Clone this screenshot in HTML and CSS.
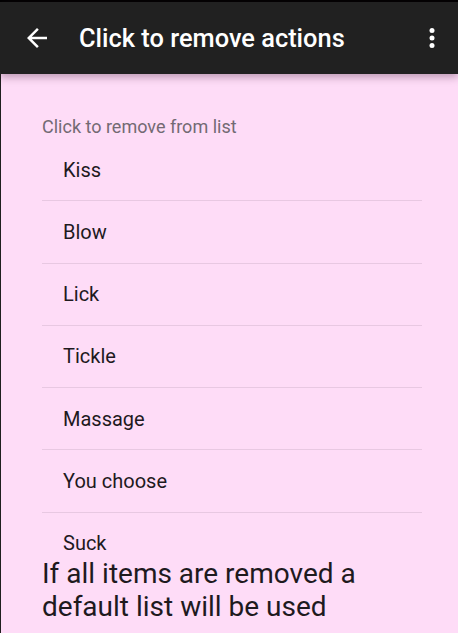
FILE: index.html
```html
<!DOCTYPE html>
<html>
<head lang="en">
    <meta charset="UTF-8">
    <title>Click to remove actions</title>
    <link rel="stylesheet" href="styles.css">
</head>
<body>
<div class="statusbar"></div>
<div class="toolbar">
    <svg class="icon" viewBox="0 0 24 24"><path d="M20 11H7.83l5.59-5.59L12 4l-8 8 8 8 1.41-1.41L7.83 13H20v-2z" fill="#fff"/></svg>
    <div class="title">Click to remove actions</div>
    <svg class="icon more" viewBox="0 0 24 24"><circle cx="12" cy="6" r="2" fill="#fff"/><circle cx="12" cy="12" r="2" fill="#fff"/><circle cx="12" cy="18" r="2" fill="#fff"/></svg>
</div>
<div class="content">
    <div class="label">Click to remove from list</div>
    <ul class="list">
        <li>Kiss</li>
        <li>Blow</li>
        <li>Lick</li>
        <li>Tickle</li>
        <li>Massage</li>
        <li>You choose</li>
        <li>Suck</li>
    </ul>
    <div class="note">If all items are removed a default list will be used</div>
</div>
</body>
</html>
```

FILE: styles.css
```css
html, body{
    margin: 0;
    height: 100%;
}
body{
    background: #fedcf7;
    font-family: Roboto, "Noto Sans", sans-serif;
    overflow: hidden;
}
.statusbar{
    height: 2px;
    background: #000;
}
.toolbar{
    height: 72px;
    background: #212121;
    display: flex;
    align-items: center;
    padding-left: 22px;
    padding-right: 11px;
    position: relative;
    z-index: 1;
    box-shadow: 0 3px 8px rgba(60, 20, 50, 0.35);
}
.icon{
    width: 30px;
    height: 30px;
    flex: none;
}
.title{
    margin-left: 27px;
    color: #fff;
    font-size: 25.4px;
    font-weight: 500;
}
.more{
    margin-left: auto;
}
.content{
    box-sizing: border-box;
    border-left: 1px solid #1f1f1f;
    padding: 41px 36px 0 41px;
    height: calc(100% - 74px);
}
.label{
    font-size: 18px;
    line-height: 24px;
    color: #736a73;
}
.list{
    list-style: none;
    margin: 0;
    padding: 0;
    height: 418px;
    overflow: hidden;
}
.list li{
    box-sizing: border-box;
    height: 62.25px;
    display: flex;
    align-items: center;
    padding-left: 21px;
    font-size: 20px;
    color: #1e1a1e;
    border-bottom: 1px solid #e8c8e2;
}
.note{
    font-size: 28px;
    line-height: 33px;
    color: #1e1a1e;
    padding-right: 20px;
}
```
